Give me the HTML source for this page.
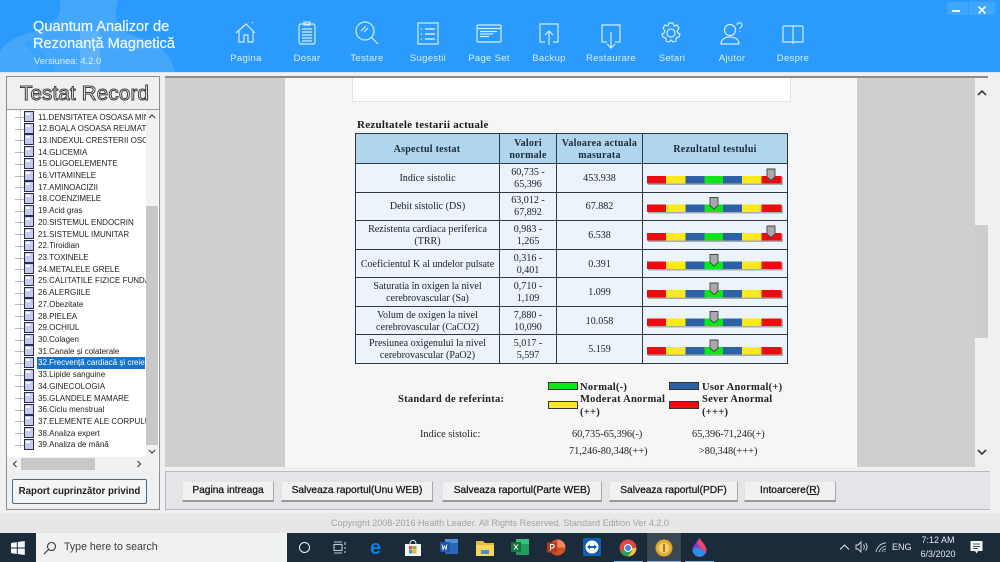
<!DOCTYPE html>
<html><head><meta charset="utf-8"><title>Quantum</title>
<style>
html,body{margin:0;padding:0;width:1000px;height:562px;overflow:hidden;background:#e8e8e8;font-family:"Liberation Sans",sans-serif}
.a{position:absolute}
#hd{left:0;top:0;width:1000px;height:72px;background:#2a9bfd}
.lb{position:absolute;top:52px;width:80px;text-align:center;font-size:9.5px;letter-spacing:.3px;color:#d8edff;line-height:13px}
.ic{position:absolute;top:20px;fill:none;stroke:#d4ebff;stroke-width:1.2}
.tr{position:absolute;left:38px;font-size:8px;line-height:11px;color:#222;white-space:nowrap;width:108px;overflow:hidden}
.ti{position:absolute;left:24px;width:10px;height:11px;background:#c9c9ee;border:1px solid #2a2a5a;box-sizing:border-box;margin-top:-1px}
.ti:before{content:"";position:absolute;left:1px;top:1px;width:4px;height:2px;background:#fff}
.dl{position:absolute;left:15px;width:9px;border-top:1px solid #b9b9b9}
.c{position:absolute;display:flex;align-items:center;justify-content:center;text-align:center;font-family:"Liberation Serif",serif;font-size:10.05px;line-height:12px;color:#222;box-sizing:border-box;padding-top:2px}
.h{font-weight:bold;background:#afd6ec;color:#1c2a38;letter-spacing:.25px;font-size:10px}
.bt{position:absolute;top:481px;height:21px;background:#f1f1f1;border:1px solid #e4e4e4;border-right:1px solid #a8a8a8;border-bottom:2px solid #9a9a9a;box-sizing:border-box;text-align:center;font-size:10.2px;line-height:18px;color:#1a1a1a;-webkit-text-stroke:.3px #1a1a1a}
.lg{position:absolute;font-family:"Liberation Serif",serif;font-weight:bold;font-size:10.5px;line-height:13px;color:#222;letter-spacing:.25px}
.rf{position:absolute;font-family:"Liberation Serif",serif;font-size:10.3px;line-height:12px;color:#222;white-space:nowrap;text-align:center}
</style></head><body>

<div class="a" id="hd"></div>
<svg class="a" style="left:0;top:0" width="185" height="72" fill="#6fbaf5" fill-opacity=".38"><path d="M60 0C62 16 56 26 30 33C12 38 3 44 0 52V72H175C170 52 158 42 135 36C118 31 112 22 118 0Z"/><path d="M30 40C40 50 50 58 55 72H40C38 60 32 50 24 44Z" fill="#2a9bfd" fill-opacity=".4"/><path d="M80 30h20v42H80z" fill="#9fd2f8" fill-opacity=".25"/></svg>
<div class="a" style="left:33px;top:19px;font-size:14.6px;line-height:16.5px;color:#eef7ff;-webkit-text-stroke:.25px #eef7ff;white-space:nowrap">Quantum Analizor de<br>Rezonanță Magnetică</div>
<div class="a" style="left:34px;top:55px;font-size:9.3px;line-height:12px;color:#dcefff;white-space:nowrap">Versiunea: 4.2.0</div>

<!-- header icons -->
<svg class="ic" style="left:234px" width="24" height="26" viewBox="0 0 24 26"><path d="M2 13L12 4l9 9M5 11v11h5v-7h4v7h5V11M18 3l1-1"/></svg>
<svg class="ic" style="left:296px" width="22" height="26" viewBox="0 0 22 26"><rect x="3" y="4" width="16" height="20" rx="2"/><rect x="8" y="2" width="6" height="3"/><path d="M6 9h10M6 12h10M6 15h10M6 18h10M6 21h10"/></svg>
<svg class="ic" style="left:354px" width="26" height="26" viewBox="0 0 26 26"><circle cx="11" cy="11" r="9"/><path d="M17 17l7 7M7 11l5-5M10 12l4-4"/></svg>
<svg class="ic" style="left:416px" width="24" height="26" viewBox="0 0 24 26"><rect x="2" y="3" width="20" height="21"/><path d="M9 9h10M9 14h10M9 19h10M5 9h1M5 14h1M5 19h1" stroke-width="1.6"/></svg>
<svg class="ic" style="left:476px" width="26" height="26" viewBox="0 0 26 26"><rect x="1" y="5" width="24" height="17" rx="1"/><path d="M1 8.500h24M4 11.500h17M4 14h13M4 16.500h9"/></svg>
<svg class="ic" style="left:537px" width="24" height="26" viewBox="0 0 24 26"><path d="M8 22H3V4h18v18h-5M12 25V11M8 15l4-4 4 4"/></svg>
<svg class="ic" style="left:599px;top:22px" width="24" height="29" viewBox="0 0 24 29"><path d="M8 20H3V3h18v17h-5M12 10v16M8 22l4 4 4-4"/></svg>
<svg class="ic" style="left:659px" width="24" height="26" viewBox="0 0 24 26"><circle cx="12" cy="13" r="4"/><path d="M10 3h4l1 3 3-1 2 3-2 3 1 2 2 1-1 3-3 1v3l-3 1-2-2-2 2-3-1v-3l-3-1-1-3 2-1 1-2-2-3 2-3 3 1z"/></svg>
<svg class="ic" style="left:719px" width="26" height="26" viewBox="0 0 26 26" stroke-width="1.6"><circle cx="11" cy="10" r="5.500"/><path d="M2 24c0-4 3-7 9-7s9 3 9 7z"/><path d="M18 5c0-3 5-3 5 0 0 2-2 2-2 4M21 11v1"/></svg>
<svg class="ic" style="left:781px" width="24" height="26" viewBox="0 0 24 26"><path d="M12 6H3a1 1 0 0 0-1 1v15h10zM12 6h9a1 1 0 0 1 1 1v15H12zM12 22v2"/></svg>
<div class="lb" style="left:206px">Pagina</div><div class="lb" style="left:267px">Dosar</div><div class="lb" style="left:327px">Testare</div><div class="lb" style="left:388px">Sugestii</div><div class="lb" style="left:449px">Page Set</div><div class="lb" style="left:509px">Backup</div><div class="lb" style="left:571px">Restaurare</div><div class="lb" style="left:632px">Setari</div><div class="lb" style="left:692px">Ajutor</div><div class="lb" style="left:753px">Despre</div>
<div class="a" style="left:947px;top:2px;width:21px;height:13px;background:#3ea6fc"></div><div class="a" style="left:969px;top:2px;width:26px;height:13px;background:#3ea6fc"></div>
<div class="a" style="left:952px;top:10px;width:8px;height:2px;background:#eaf5ff"></div>
<svg class="a" style="left:977px;top:5px" width="10" height="10"><path d="M1.500 1.500l7 7M8.500 1.500l-7 7" stroke="#f2f9ff" stroke-width="1.700"/></svg>

<!-- strip below header -->
<div class="a" style="left:0;top:72px;width:1000px;height:461px;background:#f0f0f0"></div>
<div class="a" style="left:0;top:72px;width:1000px;height:1px;background:#cfe6fb"></div>

<!-- left panel -->
<div class="a" style="left:6px;top:76px;width:154px;height:434px;background:#f0f0f0;border:1px solid #8d8d8d;box-sizing:border-box"></div>
<div class="a" style="left:7px;top:109px;width:152px;height:1px;background:#9a9a9a"></div>
<div class="a" style="left:7px;top:110px;width:152px;height:361px;background:#fff"></div>
<div class="a" style="left:20px;top:81px;font-size:20.5px;line-height:26px;font-weight:normal;color:#f7f7f7;-webkit-text-stroke:1px #3f3f3f;letter-spacing:.2px;white-space:nowrap">Testat Record</div>

<div class="a" style="left:20px;top:110px;width:1px;height:338px;border-left:1px dotted #bbb"></div>
<!-- tree rows -->
<div class="dl" style="top:117px"></div><div class="ti" style="top:112px"></div><div class="tr" style="top:112px">11.DENSITATEA OSOASA MIN</div>
<div class="dl" style="top:129px"></div><div class="ti" style="top:124px"></div><div class="tr" style="top:123px">12.BOALA OSOASA REUMAT</div>
<div class="dl" style="top:140px"></div><div class="ti" style="top:135px"></div><div class="tr" style="top:135px">13.INDEXUL CRESTERII OSOAS</div>
<div class="dl" style="top:152px"></div><div class="ti" style="top:147px"></div><div class="tr" style="top:147px">14.GLICEMIA</div>
<div class="dl" style="top:164px"></div><div class="ti" style="top:159px"></div><div class="tr" style="top:158px">15.OLIGOELEMENTE</div>
<div class="dl" style="top:176px"></div><div class="ti" style="top:171px"></div><div class="tr" style="top:170px">16.VITAMINELE</div>
<div class="dl" style="top:187px"></div><div class="ti" style="top:182px"></div><div class="tr" style="top:182px">17.AMINOACIZII</div>
<div class="dl" style="top:199px"></div><div class="ti" style="top:194px"></div><div class="tr" style="top:193px">18.COENZIMELE</div>
<div class="dl" style="top:211px"></div><div class="ti" style="top:206px"></div><div class="tr" style="top:205px">19.Acid gras</div>
<div class="dl" style="top:222px"></div><div class="ti" style="top:217px"></div><div class="tr" style="top:217px">20.SISTEMUL ENDOCRIN</div>
<div class="dl" style="top:234px"></div><div class="ti" style="top:229px"></div><div class="tr" style="top:229px">21.SISTEMUL IMUNITAR</div>
<div class="dl" style="top:246px"></div><div class="ti" style="top:241px"></div><div class="tr" style="top:240px">22.Tiroidian</div>
<div class="dl" style="top:258px"></div><div class="ti" style="top:253px"></div><div class="tr" style="top:252px">23.TOXINELE</div>
<div class="dl" style="top:269px"></div><div class="ti" style="top:264px"></div><div class="tr" style="top:264px">24.METALELE GRELE</div>
<div class="dl" style="top:281px"></div><div class="ti" style="top:276px"></div><div class="tr" style="top:275px">25.CALITATILE FIZICE FUNDAM</div>
<div class="dl" style="top:293px"></div><div class="ti" style="top:288px"></div><div class="tr" style="top:287px">26.ALERGIILE</div>
<div class="dl" style="top:304px"></div><div class="ti" style="top:299px"></div><div class="tr" style="top:299px">27.Obezitate</div>
<div class="dl" style="top:316px"></div><div class="ti" style="top:311px"></div><div class="tr" style="top:311px">28.PIELEA</div>
<div class="dl" style="top:328px"></div><div class="ti" style="top:323px"></div><div class="tr" style="top:322px">29.OCHIUL</div>
<div class="dl" style="top:340px"></div><div class="ti" style="top:335px"></div><div class="tr" style="top:334px">30.Colagen</div>
<div class="dl" style="top:351px"></div><div class="ti" style="top:346px"></div><div class="tr" style="top:346px">31.Canale și colaterale</div>
<div class="a" style="left:37px;top:357px;width:108px;height:12px;background:#1673c6"></div>
<div class="dl" style="top:363px"></div><div class="ti" style="top:358px"></div><div class="tr" style="top:357px;color:#fff">32.Frecvență cardiacă și creie</div>
<div class="dl" style="top:375px"></div><div class="ti" style="top:370px"></div><div class="tr" style="top:369px">33.Lipide sanguine</div>
<div class="dl" style="top:386px"></div><div class="ti" style="top:381px"></div><div class="tr" style="top:381px">34.GINECOLOGIA</div>
<div class="dl" style="top:398px"></div><div class="ti" style="top:393px"></div><div class="tr" style="top:393px">35.GLANDELE MAMARE</div>
<div class="dl" style="top:410px"></div><div class="ti" style="top:405px"></div><div class="tr" style="top:404px">36.Ciclu menstrual</div>
<div class="dl" style="top:421px"></div><div class="ti" style="top:416px"></div><div class="tr" style="top:416px">37.ELEMENTE ALE CORPULUI</div>
<div class="dl" style="top:433px"></div><div class="ti" style="top:428px"></div><div class="tr" style="top:428px">38.Analiza expert</div>
<div class="dl" style="top:445px"></div><div class="ti" style="top:440px"></div><div class="tr" style="top:439px">39.Analiza de mână</div>

<!-- tree scrollbars -->
<div class="a" style="left:146px;top:110px;width:12px;height:347px;background:#f1f1f1"></div>
<div class="a" style="left:146px;top:206px;width:12px;height:239px;background:#c8c8c8"></div>
<svg class="a" style="left:148px;top:113px" width="8" height="6"><path d="M1 5l3-3 3 3" fill="none" stroke="#444" stroke-width="1.200"/></svg>
<svg class="a" style="left:148px;top:449px" width="8" height="6"><path d="M1 1l3 3 3-3" fill="none" stroke="#444" stroke-width="1.200"/></svg>
<div class="a" style="left:7px;top:457px;width:151px;height:14px;background:#f1f1f1"></div>
<div class="a" style="left:21px;top:458px;width:74px;height:12px;background:#c8c8c8"></div>
<svg class="a" style="left:12px;top:460px" width="6" height="8"><path d="M4.500 1l-3 3 3 3" fill="none" stroke="#444" stroke-width="1.200"/></svg>
<svg class="a" style="left:136px;top:460px" width="6" height="8"><path d="M1.500 1l3 3-3 3" fill="none" stroke="#444" stroke-width="1.200"/></svg>
<div class="a" style="left:12px;top:479px;width:135px;height:25px;background:#f4f4f4;border:1px solid #4a6a86;border-radius:2px;box-sizing:border-box;text-align:center;font-size:9.7px;font-weight:bold;line-height:23px;color:#222;white-space:nowrap">Raport cuprinzător privind</div>

<!-- main gray panel -->
<div class="a" style="left:165px;top:76px;width:823px;height:391px;background:#cfcfcf;border-top:2px solid #8f8a85;box-sizing:border-box"></div>
<div class="a" style="left:285px;top:78px;width:572px;height:389px;background:#f6f6f6"></div>
<div class="a" style="left:352px;top:78px;width:439px;height:24px;background:#fff;border:1px solid #e3e3e3;border-top:0;box-sizing:border-box"></div>
<div class="a" style="left:975px;top:78px;width:13px;height:389px;background:#f0f0f0"></div>
<div class="a" style="left:975px;top:225px;width:13px;height:113px;background:#cdcdcd"></div>
<svg class="a" style="left:977px;top:89px" width="10" height="8"><path d="M1 6l4-4 4 4" fill="none" stroke="#3a3a3a" stroke-width="1.600"/></svg>
<svg class="a" style="left:977px;top:448px" width="10" height="8"><path d="M1 2l4 4 4-4" fill="none" stroke="#3a3a3a" stroke-width="1.600"/></svg>

<div class="a" style="left:357px;top:118px;font-family:'Liberation Serif',serif;font-weight:bold;font-size:11px;line-height:14px;color:#1a1a1a;letter-spacing:.25px;white-space:nowrap">Rezultatele testarii actuale</div>

<!-- table -->
<div class="a" style="left:355px;top:133px;width:433px;height:231px;background:#ebf4fb"></div>
<div class="c h" style="left:355px;top:133px;width:144px;height:31px">Aspectul testat</div>
<div class="c h" style="left:500px;top:133px;width:56px;height:31px">Valori<br>normale</div>
<div class="c h" style="left:557px;top:133px;width:85px;height:31px">Valoarea actuala<br>masurata</div>
<div class="c h" style="left:643px;top:133px;width:144px;height:31px">Rezultatul testului</div>

<div class="c" style="left:356px;top:164px;width:143px;height:28px">Indice sistolic</div><div class="c" style="left:500px;top:164px;width:56px;height:28px">60,735 -<br>65,396</div><div class="c" style="left:557px;top:164px;width:85px;height:28px">453.938</div>
<div class="c" style="left:356px;top:192px;width:143px;height:28px">Debit sistolic (DS)</div><div class="c" style="left:500px;top:192px;width:56px;height:28px">63,012 -<br>67,892</div><div class="c" style="left:557px;top:192px;width:85px;height:28px">67.882</div>
<div class="c" style="left:356px;top:221px;width:143px;height:28px">Rezistenta cardiaca periferica<br>(TRR)</div><div class="c" style="left:500px;top:221px;width:56px;height:28px">0,983 -<br>1,265</div><div class="c" style="left:557px;top:221px;width:85px;height:28px">6.538</div>
<div class="c" style="left:356px;top:250px;width:143px;height:28px;white-space:nowrap">Coeficientul K al undelor pulsate</div><div class="c" style="left:500px;top:250px;width:56px;height:28px">0,316 -<br>0,401</div><div class="c" style="left:557px;top:250px;width:85px;height:28px">0.391</div>
<div class="c" style="left:356px;top:278px;width:143px;height:28px">Saturatia în oxigen la nivel<br>cerebrovascular (Sa)</div><div class="c" style="left:500px;top:278px;width:56px;height:28px">0,710 -<br>1,109</div><div class="c" style="left:557px;top:278px;width:85px;height:28px">1.099</div>
<div class="c" style="left:356px;top:307px;width:143px;height:28px">Volum de oxigen la nivel<br>cerebrovascular (CaCO2)</div><div class="c" style="left:500px;top:307px;width:56px;height:28px">7,880 -<br>10,090</div><div class="c" style="left:557px;top:307px;width:85px;height:28px">10.058</div>
<div class="c" style="left:356px;top:335px;width:143px;height:28px">Presiunea oxigenului la nivel<br>cerebrovascular (PaO2)</div><div class="c" style="left:500px;top:335px;width:56px;height:28px">5,017 -<br>5,597</div><div class="c" style="left:557px;top:335px;width:85px;height:28px">5.159</div>

<svg class="a" style="left:355px;top:133px" width="434" height="232" fill="none" stroke="#2c3a46" stroke-width="1"><path d="M.5.500h432v230H.5zM144.500 0v231M201.500 0v231M287.500 0v231M0 30.500h433M0 59.500h433M0 87.500h433M0 116.500h433M0 144.500h433M0 173.500h433M0 201.500h433"/></svg>

<!-- bars -->
<svg class="a" style="left:640px;top:160px" width="150" height="205" viewBox="0 0 150 205">
<defs>
<g id="bar"><rect x="8" y="2" width="135" height="8" fill="#555" opacity=".45"/><rect x="7" y="1" width="19.500" height="7.500" fill="#ee0b10"/><rect x="26" y="1" width="19.500" height="7.500" fill="#fbe91c"/><rect x="45.500" y="1" width="19" height="7.500" fill="#2c62a5"/><rect x="64.500" y="1" width="18.500" height="7.500" fill="#10e51a"/><rect x="83" y="1" width="19" height="7.500" fill="#2c62a5"/><rect x="102" y="1" width="19.500" height="7.500" fill="#fbe91c"/><rect x="121.500" y="1" width="20" height="7.500" fill="#ee0b10"/></g>
<path id="pt" d="M-4 -7h8v8l-4 3.500l-4-3.500z" fill="#a9a9a9" stroke="#444" stroke-width=".9"/>
</defs>
<use href="#bar" y="15"/><use href="#pt" x="131" y="16"/>
<use href="#bar" y="43.500"/><use href="#pt" x="74" y="44.500"/>
<use href="#bar" y="72"/><use href="#pt" x="131" y="73"/>
<use href="#bar" y="100.500"/><use href="#pt" x="74" y="101.500"/>
<use href="#bar" y="129"/><use href="#pt" x="74" y="130"/>
<use href="#bar" y="157.500"/><use href="#pt" x="74" y="158.500"/>
<use href="#bar" y="186"/><use href="#pt" x="74" y="187"/>
</svg>

<!-- legend -->
<div class="lg" style="left:398px;top:393px;white-space:nowrap">Standard de referinta:</div>
<div class="a" style="left:548px;top:382px;width:30px;height:8px;background:#10e51a;border:1px solid #333;box-sizing:border-box"></div>
<div class="a" style="left:548px;top:401px;width:30px;height:8px;background:#fbe91c;border:1px solid #333;box-sizing:border-box"></div>
<div class="a" style="left:669px;top:382px;width:30px;height:8px;background:#2c62a5;border:1px solid #333;box-sizing:border-box"></div>
<div class="a" style="left:669px;top:401px;width:30px;height:8px;background:#ee0b10;border:1px solid #333;box-sizing:border-box"></div>
<div class="lg" style="left:580px;top:381px;white-space:nowrap">Normal(-)</div>
<div class="lg" style="left:580px;top:393px;white-space:nowrap">Moderat Anormal<br>(++)</div>
<div class="lg" style="left:702px;top:381px;white-space:nowrap">Usor Anormal(+)</div>
<div class="lg" style="left:702px;top:393px;white-space:nowrap">Sever Anormal<br>(+++)</div>
<div class="rf" style="left:420px;top:429px">Indice sistolic:</div>
<div class="rf" style="left:572px;top:429px">60,735-65,396(-)</div>
<div class="rf" style="left:692px;top:429px">65,396-71,246(+)</div>
<div class="rf" style="left:569px;top:446px">71,246-80,348(++)</div>
<div class="rf" style="left:699px;top:446px">&gt;80,348(+++)</div>

<!-- bottom toolbar -->
<div class="a" style="left:165px;top:471px;width:825px;height:39px;background:#e3e5e8;border:1px solid #b5bac0;border-right-color:#e3e5e8;box-sizing:border-box"></div>
<div class="bt" style="left:182px;width:92px">Pagina intreaga</div>
<div class="bt" style="left:281px;width:152px">Salveaza raportul(Unu WEB)</div>
<div class="bt" style="left:442px;width:160px">Salveaza raportul(Parte WEB)</div>
<div class="bt" style="left:609px;width:129px">Salveaza raportul(PDF)</div>
<div class="bt" style="left:744px;width:92px">Intoarcere(<u>R</u>)</div>
<div class="a" style="left:0;top:513px;width:1000px;height:20px;background:#e7e7e7"></div>
<div class="a" style="left:331px;top:518px;font-size:9.05px;line-height:11px;color:#a3a3a3;white-space:nowrap">Copyright 2008-2016 Health Leader. All Rights Reserved.  Standard Edition Ver 4.2.0</div>

<!-- taskbar -->
<div class="a" style="left:0;top:533px;width:1000px;height:29px;background:#1b2b3a"></div>
<svg class="a" style="left:11px;top:541px" width="14" height="14" fill="#f4f6f8"><path d="M0 2l5.800-.9V6.500H0zM6.800 1l7-1v6.500h-7zM0 7.500h5.800V13L0 12.100zM6.800 7.500h7V14l-7-1z"/></svg>
<div class="a" style="left:36px;top:533px;width:251px;height:29px;background:#f0f1f1"></div>
<svg class="a" style="left:43px;top:541px" width="14" height="14" fill="none" stroke="#333" stroke-width="1.100"><circle cx="8.500" cy="5.500" r="4"/><path d="M5.500 8.500L1 13"/></svg>
<div class="a" style="left:64px;top:540px;font-size:10.600px;line-height:15px;color:#3c3c3c;white-space:nowrap">Type here to search</div>
<div class="a" style="left:299px;top:542px;width:11px;height:11px;border:1.800px solid #f2f4f6;border-radius:50%;box-sizing:border-box"></div>
<svg class="a" style="left:333px;top:541px" width="14" height="13" fill="none" stroke="#c4cad0" stroke-width="1.100"><rect x="1" y="3.500" width="8" height="6"/><path d="M1 1h8M1 12h8M12 1v3M12 6v2M12 10v2"/></svg>
<div class="a" style="left:370px;top:538px;font-size:20px;line-height:20px;font-weight:bold;color:#0f7fdc">e</div>
<svg class="a" style="left:404px;top:539px" width="18" height="18"><path d="M1 5h16v12H1z" fill="#f3f3f3"/><path d="M6 5c0-5 6-5 6 0" fill="none" stroke="#eee"/><rect x="5" y="7" width="3.500" height="3.500" fill="#e8522a"/><rect x="9" y="7" width="3.500" height="3.500" fill="#7db72f"/><rect x="5" y="11" width="3.500" height="3.500" fill="#2a9fe0"/><rect x="9" y="11" width="3.500" height="3.500" fill="#f4b71b"/></svg>
<svg class="a" style="left:440px;top:539px" width="18" height="15"><rect x="5" y="0" width="13" height="15" fill="#2a66bb"/><rect x="5" y="0" width="13" height="4" fill="#4f8fdc"/><rect x="0" y="3" width="10" height="10" fill="#1f56a8"/><path d="M2 5.500l1 5 1.500-3.500 1.500 3.500 1-5" stroke="#fff" fill="none" stroke-width=".9"/></svg>
<svg class="a" style="left:476px;top:541px" width="18" height="15"><path d="M0 0h7l2 2h9v13H0z" fill="#e8b93a"/><rect x="0" y="4" width="18" height="11" fill="#f6d65c"/><rect x="5" y="9" width="8" height="4" fill="#4a8dc8"/></svg>
<svg class="a" style="left:511px;top:539px" width="18" height="16"><rect x="5" y="0" width="13" height="16" fill="#1f9d5a"/><rect x="5" y="0" width="13" height="5" fill="#33c27a"/><rect x="0" y="3" width="10" height="10" fill="#16733f"/><path d="M3 5.500l4 5M7 5.500l-4 5" stroke="#fff" stroke-width="1"/></svg>
<svg class="a" style="left:547px;top:539px" width="19" height="17"><circle cx="10.500" cy="8.500" r="8" fill="#d2512c"/><path d="M10.500.500a8 8 0 0 1 8 8h-8z" fill="#f08a5b"/><rect x="0" y="3.500" width="10" height="10" fill="#b43a1b"/><path d="M3.500 11.500v-6h2a1.500 1.500 0 0 1 0 3.500h-2" stroke="#fff" fill="none"/></svg>
<svg class="a" style="left:583px;top:538px" width="18" height="18"><rect width="18" height="18" rx="1" fill="#0f5fb5"/><circle cx="9" cy="9" r="6.500" fill="#fff"/><path d="M4 9l3-2.500v1.500h4V6.500L14 9l-3 2.500V10H7v1.500z" fill="#0f5fb5"/></svg>
<svg class="a" style="left:619px;top:539px" width="18" height="18"><circle cx="9" cy="9" r="8.500" fill="#dc4b3e"/><path d="M9 9L1.600 13.200A8.500 8.500 0 0 0 9 17.500L13 12z" fill="#2ba24c"/><path d="M9 9L13 12 9 17.500A8.500 8.500 0 0 0 17.500 9z" fill="#f5c33b"/><circle cx="9" cy="9" r="4" fill="#fff"/><circle cx="9" cy="9" r="3" fill="#4586f0"/></svg>
<div class="a" style="left:647px;top:533px;width:34px;height:29px;background:#3b4752"></div>
<div class="a" style="left:614px;top:561px;width:29px;height:1px;background:#76b9ed"></div><div class="a" style="left:647px;top:561px;width:34px;height:1px;background:#76b9ed"></div><div class="a" style="left:685px;top:561px;width:29px;height:1px;background:#76b9ed"></div>
<svg class="a" style="left:655px;top:539px" width="18" height="18"><circle cx="9" cy="9" r="8.500" fill="#e0a62a"/><circle cx="9" cy="9" r="5.500" fill="#f1d170"/><rect x="8" y="5" width="2" height="8" fill="#b5781a"/></svg>
<svg class="a" style="left:692px;top:538px" width="15" height="19"><path d="M7.500 0C10 4 14.500 8 14.500 12a7 7 0 0 1-14 0C.5 8 5 4 7.500 0z" fill="#7a3fd0"/><path d="M7.500 0C10 4 14.500 8 14.500 12c0 1-.3 2-.8 3C9 10 6 8 5 4z" fill="#e9476f"/><path d="M.5 12c2-3 8-3 13 3a7 7 0 0 1-13-3z" fill="#2a90e6"/></svg>
<svg class="a" style="left:839px;top:543px" width="11" height="8"><path d="M1 6.500l4.500-4.500 4.500 4.500" fill="none" stroke="#e6eaee" stroke-width="1"/></svg>
<svg class="a" style="left:855px;top:541px" width="14" height="12" fill="none" stroke="#dfe3e7" stroke-width=".9"><path d="M1 4h2l3-3v10L3 8H1zM8.500 3.500c1 1.500 1 3.500 0 5M10.500 2c2 2.500 2 5.500 0 8"/></svg>
<svg class="a" style="left:875px;top:542px" width="12" height="11" fill="none" stroke="#c9ced3" stroke-width=".9"><path d="M1 10C2 5 6 1 11 1M4 10c1-3 3-5 7-6M7 10c.5-1.500 2-3 4-3M10 9v1"/></svg>
<div class="a" style="left:892px;top:540px;font-size:9px;line-height:14px;color:#e6eaee;white-space:nowrap">ENG</div>
<div class="a" style="left:915px;top:534px;width:46px;text-align:center;font-size:9px;line-height:13.500px;color:#e6eaee;white-space:nowrap">7:12 AM<br>6/3/2020</div>
<svg class="a" style="left:970px;top:541px" width="13" height="14"><path d="M.5 0h12v10H8l-1.500 2.500L5 10H.5z" fill="#f2f4f6"/><path d="M3 3h7M3 5.500h7M3 7.500h5" stroke="#1b2b3a" stroke-width=".8"/></svg>
</body></html>
